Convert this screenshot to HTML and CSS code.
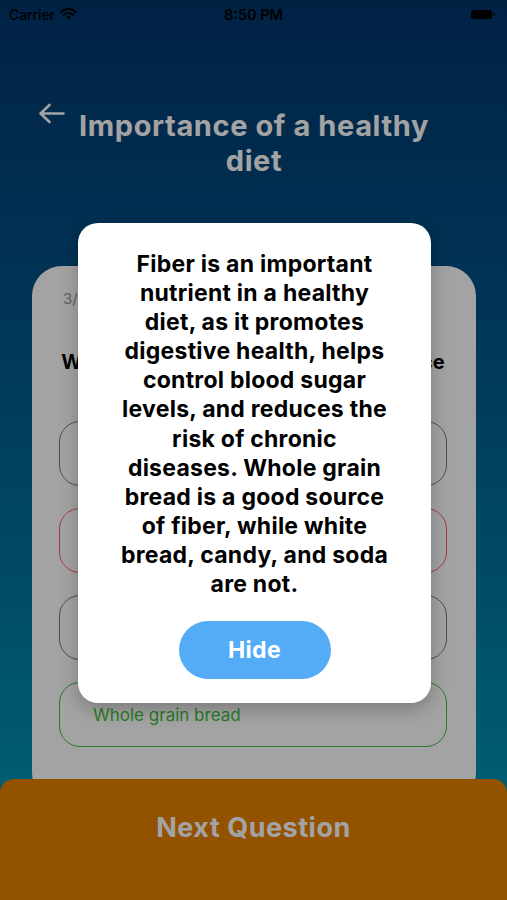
FILE: index.html
```html
<!DOCTYPE html>
<html>
<head>
<meta charset="utf-8">
<link rel="stylesheet" href="styles.css">
</head>
<body>
<div class="screen">
  <div class="status">
    <div class="status-left">
      <span class="carrier">Carrier</span>
      <svg class="wifi" width="17" height="12" viewBox="0 0 17 12">
        <path d="M8.5 11.5 L6.2 9.1 A3.3 3.3 0 0 1 10.8 9.1 Z" fill="#000"/>
        <path d="M3.9 6.8 A6.5 6.5 0 0 1 13.1 6.8" stroke="#000" stroke-width="2" fill="none" stroke-linecap="round"/>
        <path d="M1.2 4.1 A10.3 10.3 0 0 1 15.8 4.1" stroke="#000" stroke-width="2" fill="none" stroke-linecap="round"/>
      </svg>
    </div>
    <span class="time">8:50 PM</span>
    <div class="battery"><span class="battery-body"></span><span class="battery-nub"></span></div>
  </div>

  <div class="header">
    <svg class="back" width="27" height="21" viewBox="0 0 27 21">
      <path d="M25.5 10.5 H3 M11.5 2 L2.5 10.5 L11.5 19" stroke="#fff" stroke-width="2.6" fill="none" stroke-linecap="round" stroke-linejoin="round"/>
    </svg>
    <h1 class="title">Importance of a healthy<br>diet</h1>
  </div>

  <div class="card">
    <div class="progress">3/10</div>
    <div class="question">Which of the following is a good source<br>of fiber?</div>
    <div class="options">
      <div class="option">White bread</div>
      <div class="option option-wrong">Candy</div>
      <div class="option">Soda</div>
      <div class="option option-right">Whole grain bread</div>
    </div>
  </div>

  <div class="next">Next Question</div>

  <div class="dim"></div>

  <div class="modal">
    <p class="modal-text">Fiber is an important<br>nutrient in a healthy<br>diet, as it promotes<br>digestive health, helps<br>control blood sugar<br>levels, and reduces the<br>risk of chronic<br>diseases. Whole grain<br>bread is a good source<br>of fiber, while white<br>bread, candy, and soda<br>are not.</p>
    <div class="hide">Hide</div>
  </div>
</div>
</body>
</html>
```

FILE: styles.css
```css
* { box-sizing: border-box; }
html, body { margin: 0; padding: 0; }
body {
  width: 507px;
  height: 900px;
  overflow: hidden;
  font-family: Inter, "Noto Sans", "Liberation Sans", sans-serif;
}
.screen {
  position: relative;
  width: 507px;
  height: 900px;
  display: flex;
  flex-direction: column;
  background: linear-gradient(180deg, #03356a 0%, #005d92 45%, #00a2bd 100%);
}
.status {
  height: 28px;
  display: flex;
  align-items: center;
  justify-content: space-between;
  padding: 0 12px 0 9px;
  position: relative;
}
.status-left { display: flex; align-items: center; gap: 5px; }
.carrier { font-size: 14px; font-weight: 500; color: #000; letter-spacing: -0.1px; }
.wifi { margin-top: -1px; }
.time {
  position: absolute;
  left: 0; right: 0;
  text-align: center;
  font-size: 14.5px;
  font-weight: 600;
  color: #000;
}
.battery { display: flex; align-items: center; gap: 1px; }
.battery-body { width: 21px; height: 9px; background: #000; border-radius: 2.5px; }
.battery-nub { width: 2px; height: 4px; background: #000; border-radius: 0 1px 1px 0; opacity: 0.5; }

.header {
  display: flex;
  align-items: flex-start;
  padding: 75px 68px 0 38px;
  gap: 4px;
}
.back { margin-top: 0; flex: none; }
.title {
  flex: 1;
  margin: 5px 0 0;
  text-align: center;
  color: #fff;
  font-size: 29px;
  font-weight: 700;
  line-height: 35px;
  letter-spacing: 0.6px;
  white-space: nowrap;
}

.card {
  flex: 1;
  margin: 88px 31px -24px 32px;
  background: #fff;
  border-radius: 30px;
  padding: 23px 29px 0 27px;
}
.progress {
  font-size: 15px;
  color: #999;
  padding-left: 4px;
  line-height: 20px;
}
.question {
  margin-top: 41px;
  margin-left: -12px;
  margin-right: -12px;
  text-align: center;
  font-size: 20px;
  font-weight: 700;
  color: #000;
  line-height: 24px;
  white-space: nowrap;
}
.options {
  margin-top: 23px;
  display: flex;
  flex-direction: column;
  gap: 22px;
}
.option {
  height: 65px;
  border: 1px solid #7a7a7a;
  border-radius: 21px;
  display: flex;
  align-items: center;
  padding-left: 33px;
  font-size: 17px;
  color: #000;
}
.option-wrong { border-color: #ff6060; }
.option-right { border-color: #44c044; color: #3fbf3f; }

.next {
  position: relative;
  height: 121px;
  flex: none;
  background: #e68000;
  border-radius: 14px 14px 0 0;
  display: flex;
  justify-content: center;
  padding-top: 32px;
  color: #fff;
  font-size: 27px;
  font-weight: 700;
  letter-spacing: 0.5px;
}

.dim {
  position: absolute;
  inset: 0;
  background: rgba(0, 0, 0, 0.36);
}

.modal {
  position: absolute;
  top: 223px;
  left: 78px;
  width: 353px;
  height: 480px;
  background: #fff;
  border-radius: 20px;
  padding: 27px 20px 0;
  display: flex;
  flex-direction: column;
  align-items: center;
  box-shadow: 0 6px 18px rgba(0, 0, 0, 0.25);
}
.modal-text {
  margin: 0;
  text-align: center;
  font-size: 23px;
  font-weight: 700;
  line-height: 29.1px;
  color: #000;
  letter-spacing: 0.25px;
  white-space: nowrap;
}
.hide {
  margin-top: 22px;
  width: 152px;
  height: 58px;
  border-radius: 29px;
  background: #55acf6;
  color: #fff;
  font-size: 23px;
  font-weight: 700;
  letter-spacing: 0.4px;
  display: flex;
  align-items: center;
  justify-content: center;
}
```
